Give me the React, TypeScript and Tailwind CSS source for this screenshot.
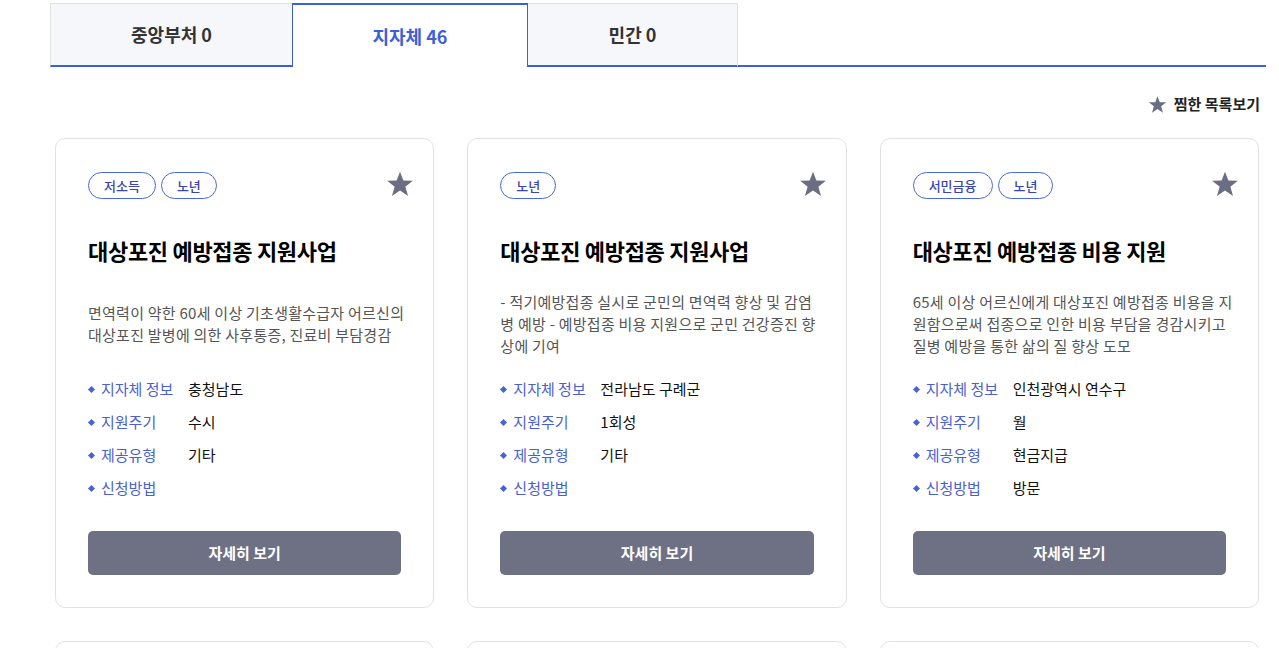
import React from 'react'

type Card = {
  tags: string[]
  title: string
  desc: string
  region: string
  cycle: string
  kind: string
  method: string
}

const cards: Card[] = [
  {
    tags: ['저소득', '노년'],
    title: '대상포진 예방접종 지원사업',
    desc: '면역력이 약한 60세 이상 기초생활수급자 어르신의 대상포진 발병에 의한 사후통증, 진료비 부담경감',
    region: '충청남도',
    cycle: '수시',
    kind: '기타',
    method: '',
  },
  {
    tags: ['노년'],
    title: '대상포진 예방접종 지원사업',
    desc: '- 적기예방접종 실시로 군민의 면역력 향상 및 감염병 예방 - 예방접종 비용 지원으로 군민 건강증진 향상에 기여',
    region: '전라남도 구례군',
    cycle: '1회성',
    kind: '기타',
    method: '',
  },
  {
    tags: ['서민금융', '노년'],
    title: '대상포진 예방접종 비용 지원',
    desc: '65세 이상 어르신에게 대상포진 예방접종 비용을 지원함으로써 접종으로 인한 비용 부담을 경감시키고 질병 예방을 통한 삶의 질 향상 도모',
    region: '인천광역시 연수구',
    cycle: '월',
    kind: '현금지급',
    method: '방문',
  },
]

const Star = ({ size }: { size: number }) => (
  <svg width={size} height={size} viewBox="0 0 24 24" fill="#6b6e82">
    <polygon points="12,1.5 14.9,9 23,9.3 16.6,14.3 18.9,22.3 12,17.6 5.1,22.3 7.4,14.3 1,9.3 9.1,9" />
  </svg>
)

const InfoRow = ({ label, value }: { label: string; value: string }) => (
  <li className="flex items-center h-[33px]">
    <span className="w-[5px] h-[5px] rotate-45 bg-[#4a63d4] ml-[1px] mr-[7px]" />
    <span className="w-[87px] text-[#4a5fd0]">{label}</span>
    <span className="text-[#111]">{value}</span>
  </li>
)

const PolicyCard = ({ card }: { card: Card }) => (
  <div className="border border-[#e2e2e2] rounded-[10px] bg-white px-[32px] pt-[33px] pb-[32px]">
    <div className="flex items-start justify-between h-[26px]">
      <div className="flex gap-[5px]">
        {card.tags.map((t) => (
          <span
            key={t}
            className="h-[27px] px-[15px] flex items-center rounded-full border border-[#4868da] text-[13px] font-medium text-[#3a45b0]"
          >
            {t}
          </span>
        ))}
      </div>
      <div className="-mt-[2px] -mr-[13px]">
        <Star size={28} />
      </div>
    </div>
    <h3 className="mt-[37px] h-[30px] leading-[30px] text-[22px] font-bold text-black tracking-[-0.3px] whitespace-nowrap">
      {card.title}
    </h3>
    <div className="mt-[21px] h-[76px] flex items-center -mr-[9px]">
      <p className="text-[15px] leading-[22px] text-[#555] tracking-[0.25px]">{card.desc}</p>
    </div>
    <ul className="mt-[11px] text-[15px]">
      <InfoRow label="지자체 정보" value={card.region} />
      <InfoRow label="지원주기" value={card.cycle} />
      <InfoRow label="제공유형" value={card.kind} />
      <InfoRow label="신청방법" value={card.method} />
    </ul>
    <button className="mt-[26px] w-full h-[44px] rounded-[5px] bg-[#6e7083] text-white text-[15px] font-bold">
      자세히 보기
    </button>
  </div>
)

const App = () => {
  return (
    <div
      className="bg-white min-h-screen overflow-hidden"
      style={{ fontFamily: '"Noto Sans CJK KR", "Noto Sans", sans-serif' }}
    >
      <div className="ml-[50px] w-[1216px]">
        <div className="flex mt-[3px] h-[64px]">
          <div className="w-[242px] flex items-center justify-center bg-[#f6f7fb] border-t border-l border-[#e1e1e1] border-b-2 border-b-[#3d5fd8] text-[18px] font-bold text-[#333]">
            중앙부처 0
          </div>
          <div className="w-[236px] flex items-center justify-center bg-white border-t-2 border-x border-[#3d5fd8] text-[18px] font-bold text-[#3d5fd8]">
            지자체 46
          </div>
          <div className="w-[210px] flex items-center justify-center bg-[#f6f7fb] border-t border-r border-[#e1e1e1] border-b-2 border-b-[#3d5fd8] text-[18px] font-bold text-[#333]">
            민간 0
          </div>
          <div className="flex-1 border-b-2 border-[#3d5fd8]" />
        </div>

        <div className="mt-[27px] h-[20px] flex items-center justify-end gap-[7px] pr-[6px]">
          <Star size={19} />
          <span className="text-[15px] font-bold text-[#222]">찜한 목록보기</span>
        </div>

        <div className="mt-[24px] pl-[5px] pr-[7px] grid grid-cols-3 gap-[33px]">
          {cards.map((c, i) => (
            <PolicyCard key={i} card={c} />
          ))}
          {cards.map((c, i) => (
            <PolicyCard key={'b' + i} card={c} />
          ))}
        </div>
      </div>
    </div>
  )
}

export default App
